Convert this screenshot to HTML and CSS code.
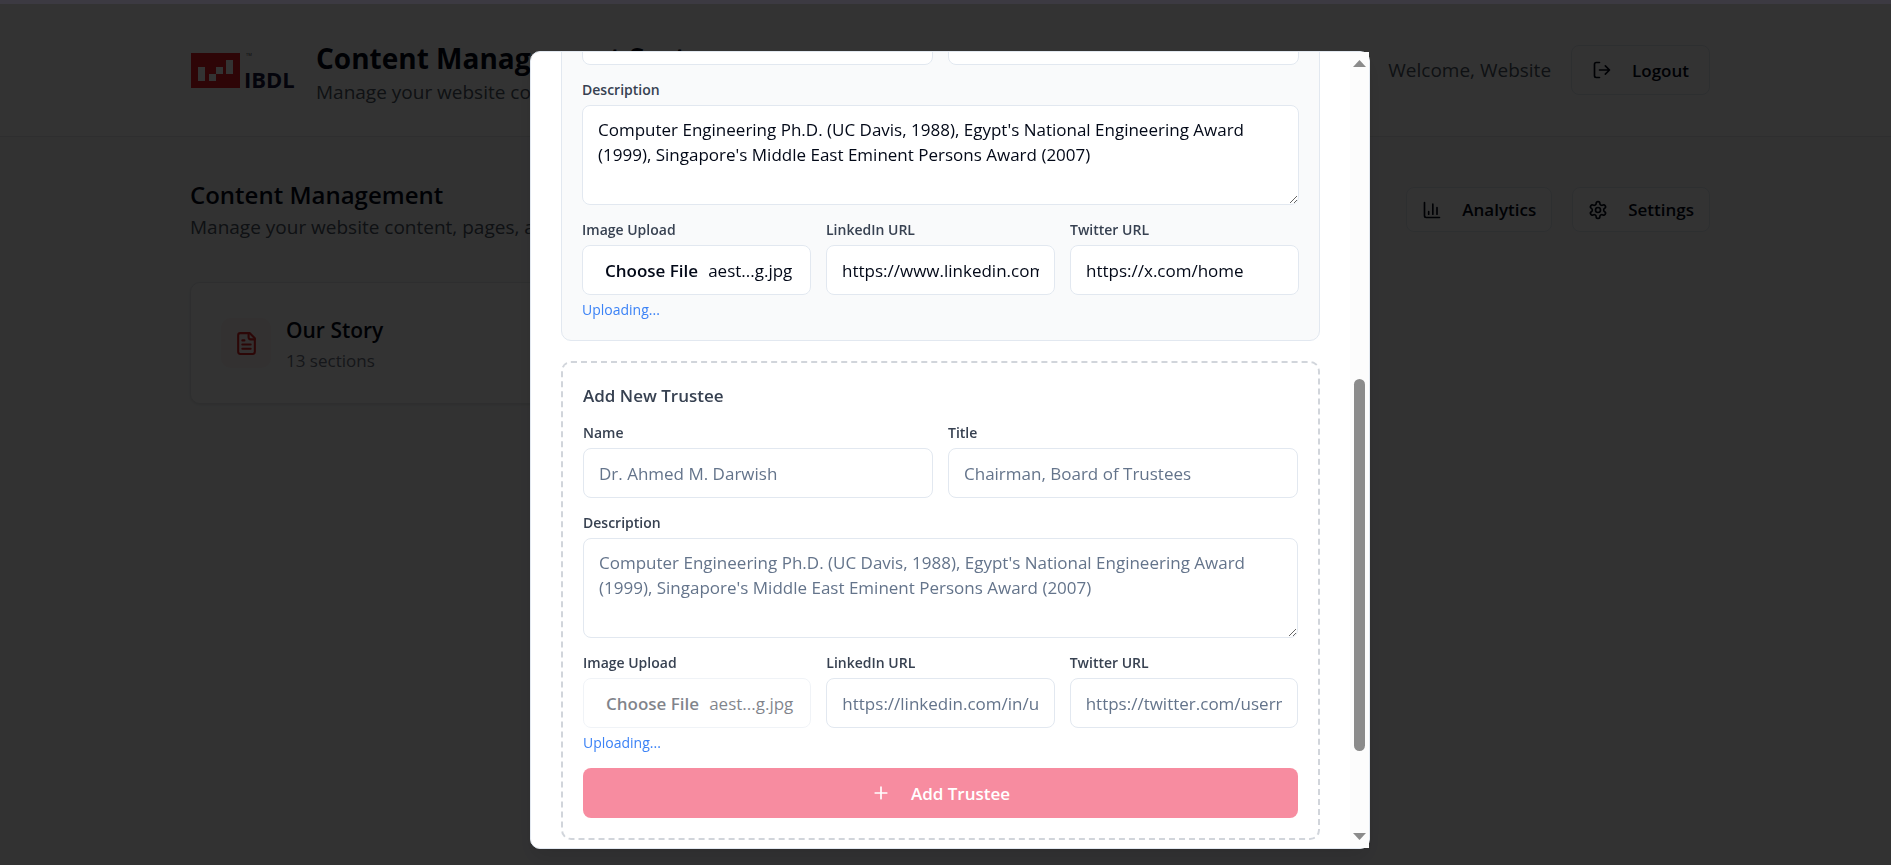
FILE: index.html
```html
<!DOCTYPE html>
<html lang="en">

<head>
    <meta charset="UTF-8">
    <meta name="viewport" content="width=device-width, initial-scale=1.0">
    <title>Content Management System</title>
    <link rel="stylesheet" href="styles.css">
</head>

<body>
    <div class="page">
        <header class="header">
            <div class="container header_row">
                <div class="brand">
                    <svg class="logo" viewBox="0 0 105 40" aria-label="IBDL">
                        <rect x="1" y="3" width="49" height="35" fill="#e31b23" />
                        <path fill="#fff" d="M8 17h7v14H8zM19 24h7v7h-7zM26 17h7v7h-7zM36 10h7v14h-7z" />
                        <text x="56" y="6" class="logo_tm">TM</text>
                        <text x="54" y="38" class="logo_text">IBDL</text>
                    </svg>
                    <div class="brand_text">
                        <h1 class="title">Content Management System</h1>
                        <p class="subtitle">Manage your website content</p>
                    </div>
                </div>
                <div class="user">
                    <span class="subtitle">Welcome, Website</span>
                    <button class="btn btn_logout">
                        <svg class="icon" viewBox="0 0 24 24"><path d="M9 21H5a2 2 0 0 1-2-2V5a2 2 0 0 1 2-2h4" /><path d="m16 17 5-5-5-5M21 12H9" /></svg>
                        Logout
                    </button>
                </div>
            </div>
        </header>

        <main class="container main">
            <div class="main_top">
                <div>
                    <h2 class="main_h2">Content Management</h2>
                    <p class="subtitle">Manage your website content, pages, and media</p>
                </div>
                <div class="actions">
                    <button class="btn">
                        <svg class="icon" viewBox="0 0 24 24"><path d="M3 3v16a2 2 0 0 0 2 2h16M18 17V9M13 17V5M8 17v-3" /></svg>
                        Analytics
                    </button>
                    <button class="btn">
                        <svg class="icon" viewBox="0 0 24 24"><path d="M12.22 2h-.44a2 2 0 0 0-2 2v.18a2 2 0 0 1-1 1.73l-.43.25a2 2 0 0 1-2 0l-.15-.08a2 2 0 0 0-2.73.73l-.22.38a2 2 0 0 0 .73 2.73l.15.1a2 2 0 0 1 1 1.72v.51a2 2 0 0 1-1 1.74l-.15.09a2 2 0 0 0-.73 2.73l.22.38a2 2 0 0 0 2.73.73l.15-.08a2 2 0 0 1 2 0l.43.25a2 2 0 0 1 1 1.73V20a2 2 0 0 0 2 2h.44a2 2 0 0 0 2-2v-.18a2 2 0 0 1 1-1.73l.43-.25a2 2 0 0 1 2 0l.15.08a2 2 0 0 0 2.73-.73l.22-.39a2 2 0 0 0-.73-2.73l-.15-.08a2 2 0 0 1-1-1.74v-.5a2 2 0 0 1 1-1.74l.15-.09a2 2 0 0 0 .73-2.73l-.22-.38a2 2 0 0 0-2.73-.73l-.15.08a2 2 0 0 1-2 0l-.43-.25a2 2 0 0 1-1-1.73V4a2 2 0 0 0-2-2z" /><circle cx="12" cy="12" r="3" /></svg>
                        Settings
                    </button>
                </div>
            </div>
            <div class="cards">
                <div class="card">
                    <div class="card_icon">
                        <svg viewBox="0 0 24 24"><path d="M15 2H6a2 2 0 0 0-2 2v16a2 2 0 0 0 2 2h12a2 2 0 0 0 2-2V7Z" /><path d="M14 2v4a2 2 0 0 0 2 2h4M10 9H8M16 13H8M16 17H8" /></svg>
                    </div>
                    <div>
                        <h3 class="card_h3">Our Story</h3>
                        <p class="card_p">13 sections</p>
                    </div>
                </div>
            </div>
        </main>
    </div>

    <div class="overlay">
        <div class="modal" role="dialog" aria-label="Board of Trustees">
            <div class="modal_body">
                <section class="trustee">
                    <div class="row row_2">
                        <input class="input" type="text" aria-label="Name">
                        <input class="input" type="text" aria-label="Title">
                    </div>
                    <div class="field">
                        <label for="desc1">Description</label>
                        <textarea class="input area" id="desc1">Computer Engineering Ph.D. (UC Davis, 1988), Egypt's National Engineering Award (1999), Singapore's Middle East Eminent Persons Award (2007)</textarea>
                    </div>
                    <div class="row row_3">
                        <div class="field">
                            <label for="file1">Image Upload</label>
                            <label class="input file" for="file1">
                                <b>Choose File</b>
                                <span>aest...g.jpg</span>
                            </label>
                            <input class="file_input" type="file" id="file1">
                            <p class="status">Uploading...</p>
                        </div>
                        <div class="field">
                            <label for="in1">LinkedIn URL</label>
                            <input class="input" type="text" id="in1" value="https://www.linkedin.com/">
                        </div>
                        <div class="field">
                            <label for="tw1">Twitter URL</label>
                            <input class="input" type="text" id="tw1" value="https://x.com/home">
                        </div>
                    </div>
                </section>

                <section class="trustee trustee_new">
                    <h4 class="new_h4">Add New Trustee</h4>
                    <div class="row row_2">
                        <div class="field">
                            <label for="name2">Name</label>
                            <input class="input" type="text" id="name2" placeholder="Dr. Ahmed M. Darwish">
                        </div>
                        <div class="field">
                            <label for="title2">Title</label>
                            <input class="input" type="text" id="title2" placeholder="Chairman, Board of Trustees">
                        </div>
                    </div>
                    <div class="field">
                        <label for="desc2">Description</label>
                        <textarea class="input area" id="desc2" placeholder="Computer Engineering Ph.D. (UC Davis, 1988), Egypt's National Engineering Award (1999), Singapore's Middle East Eminent Persons Award (2007)"></textarea>
                    </div>
                    <div class="row row_3">
                        <div class="field">
                            <label for="file2">Image Upload</label>
                            <label class="input file file_off" for="file2">
                                <b>Choose File</b>
                                <span>aest...g.jpg</span>
                            </label>
                            <input class="file_input" type="file" id="file2" disabled>
                            <p class="status">Uploading...</p>
                        </div>
                        <div class="field">
                            <label for="in2">LinkedIn URL</label>
                            <input class="input" type="text" id="in2" placeholder="https://linkedin.com/in/username">
                        </div>
                        <div class="field">
                            <label for="tw2">Twitter URL</label>
                            <input class="input" type="text" id="tw2" placeholder="https://twitter.com/username">
                        </div>
                    </div>
                    <button class="btn btn_add" disabled>
                        <svg class="icon" viewBox="0 0 24 24"><path d="M5 12h14M12 5v14" /></svg>
                        Add Trustee
                    </button>
                </section>
            </div>
            <div class="scroll">
                <svg class="arrow" viewBox="0 0 13 7"><path d="M6.5 0 13 7H0z" /></svg>
                <div class="scroll_track">
                    <div class="thumb"></div>
                </div>
                <svg class="arrow" viewBox="0 0 13 7"><path d="M0 0h13L6.5 7z" /></svg>
            </div>
        </div>
    </div>
</body>

</html>
```
FILE: styles.css
```css
* {
    margin: 0;
    padding: 0;
    box-sizing: border-box;
}

body {
    font-family: "Open Sans", "Noto Sans", sans-serif;
    font-size: 17px;
    line-height: 25px;
    color: #020817;
    background-color: #f9fafb;
    height: 100vh;
    overflow: hidden;
}

button, input, textarea {
    font: inherit;
    color: inherit;
}

.page {
    padding: 4px 0 0 9px;
}

.container {
    max-width: 1600px;
    margin: 0 auto;
    padding: 0 40px;
}

.header {
    background-color: white;
    border-bottom: 1px solid #e5e7eb;
    margin-left: -9px;
    padding: 29px 0 29px 9px;
}

.header_row, .brand, .user, .actions {
    display: flex;
    align-items: center;
}

.header_row, .main_top {
    display: flex;
    justify-content: space-between;
}

.brand {
    gap: 21px;
}

.brand_text {
    padding-top: 6px;
}

.logo {
    width: 105px;
    height: 40px;
    overflow: visible;
}

.logo_text {
    font-size: 22px;
    font-weight: 700;
    fill: #14143c;
}

.logo_tm {
    font-size: 4px;
    fill: #333333;
}

.title {
    font-size: 28px;
    line-height: 38px;
    font-weight: 700;
}

.subtitle {
    font-size: 19px;
    line-height: 30px;
    color: #4b5563;
}

.user, .actions {
    gap: 20px;
}

.btn {
    display: flex;
    align-items: center;
    justify-content: center;
    gap: 20px;
    height: 45px;
    padding: 0 15px;
    font-weight: 600;
    background-color: white;
    border: 1px solid #e2e8f0;
    border-radius: 8px;
}

.btn_logout {
    height: 50px;
    padding: 0 20px;
}

.icon {
    width: 20px;
    height: 20px;
}

.icon, .card_icon svg {
    fill: none;
    stroke: currentColor;
    stroke-width: 2;
    stroke-linecap: round;
    stroke-linejoin: round;
}

.main {
    padding-top: 40px;
}

.main_top {
    align-items: center;
    margin-bottom: 40px;
}

.main_h2 {
    font-size: 24px;
    line-height: 35px;
    font-weight: 600;
}

.cards {
    display: grid;
    grid-template-columns: repeat(3, 1fr);
    gap: 30px;
}

.card {
    display: flex;
    align-items: center;
    gap: 15px;
    padding: 30px;
    background-color: white;
    border: 1px solid #e5e7eb;
    border-radius: 10px;
    box-shadow: 0 1px 3px rgba(0, 0, 0, 0.1);
}

.card_icon {
    display: flex;
    align-items: center;
    justify-content: center;
    width: 50px;
    height: 50px;
    border-radius: 10px;
    background-color: #fef2f2;
    color: #dc2626;
}

.card_icon svg {
    width: 25px;
    height: 25px;
}

.card_h3 {
    font-size: 21px;
    line-height: 35px;
    font-weight: 600;
}

.card_p {
    color: #6b7280;
}

.overlay {
    position: fixed;
    inset: 0;
    display: flex;
    justify-content: center;
    padding: 47px 0 16px 9px;
    background-color: rgba(0, 0, 0, 0.8);
    border-top: 4px solid #3c3a42;
    background-clip: padding-box;
}

.modal {
    display: flex;
    width: 100%;
    max-width: 840px;
    background-color: white;
    border: 1px solid #e2e8f0;
    border-radius: 10px;
    box-shadow: 0 10px 20px rgba(0, 0, 0, 0.1);
}

/* scrolled down, so the first trustee is cut at the top */
.modal_body {
    flex: 1;
    min-width: 0;
    display: flex;
    flex-direction: column;
    justify-content: flex-end;
    gap: 20px;
    padding: 0 30px 8px;
    overflow: hidden;
    border-radius: 9px 0 0 9px;
}

.trustee {
    display: flex;
    flex-direction: column;
    gap: 15px;
    padding: 20px;
    background-color: #f9fafb;
    border: 1px solid #e2e8f0;
    border-radius: 10px;
}

.trustee_new {
    background-color: white;
    border: 2px dashed #d1d5db;
}

.new_h4 {
    font-weight: 600;
    color: #374151;
}

.row {
    display: grid;
    gap: 15px;
}

.row_2 {
    grid-template-columns: repeat(2, 1fr);
}

.row_3 {
    grid-template-columns: repeat(3, 1fr);
}

.field {
    display: flex;
    flex-direction: column;
    gap: 5px;
    min-width: 0;
    font-size: 14px;
    line-height: 20px;
    font-weight: 600;
    color: #374151;
}

.input {
    width: 100%;
    height: 50px;
    padding: 0 15px;
    font-size: 17px;
    line-height: 25px;
    font-weight: 400;
    color: #020817;
    background-color: white;
    border: 1px solid #e2e8f0;
    border-radius: 8px;
}

.input::placeholder {
    color: #64748b;
}

.area {
    display: block;
    height: 100px;
    padding: 11px 15px;
    resize: vertical;
}

.file {
    display: flex;
    align-items: center;
    gap: 10px;
    padding-left: 22px;
    white-space: nowrap;
}

.file b {
    font-weight: 600;
}

.file_off {
    opacity: 0.5;
}

.file_input {
    position: absolute;
    width: 1px;
    height: 1px;
    opacity: 0;
}

.status {
    font-weight: 400;
    color: #3b82f6;
}

.btn_add {
    height: 50px;
    border: none;
    color: white;
    background-color: #f01a42;
    opacity: 0.5;
}

.scroll {
    display: flex;
    flex-direction: column;
    align-items: center;
    width: 19px;
    padding: 8px 0;
    background-color: #fcfcfc;
}

.arrow {
    width: 13px;
    height: 7px;
    fill: #8b8b8b;
}

.scroll_track {
    flex: 1;
    display: flex;
    align-items: flex-end;
    padding-bottom: 82px;
}

.thumb {
    width: 11px;
    height: 54%;
    min-height: 372px;
    border-radius: 6px;
    background-color: #8b8b8b;
}
```
